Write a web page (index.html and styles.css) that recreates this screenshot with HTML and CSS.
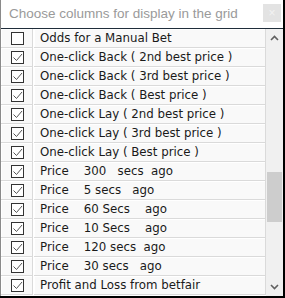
FILE: index.html
```html
<!DOCTYPE html>
<html lang="en">
<head>
    <meta charset="UTF-8">
    <title>Choose columns</title>
    <link rel="stylesheet" href="styles.css">
</head>
<body>
<div class="dialog">
    <div class="titlebar">
        <span class="title">Choose columns for display in the grid</span>
        <span class="close">&times;</span>
    </div>
    <div class="grid">
        <div class="list">
            <div class="row"><div class="check"><span class="box"></span></div><div class="label">Odds for a Manual Bet</div></div>
            <div class="row"><div class="check"><span class="box on"></span></div><div class="label">One-click Back ( 2nd best price )</div></div>
            <div class="row"><div class="check"><span class="box on"></span></div><div class="label">One-click Back ( 3rd best price )</div></div>
            <div class="row"><div class="check"><span class="box on"></span></div><div class="label">One-click Back ( Best price )</div></div>
            <div class="row"><div class="check"><span class="box on"></span></div><div class="label">One-click Lay ( 2nd best price )</div></div>
            <div class="row"><div class="check"><span class="box on"></span></div><div class="label">One-click Lay ( 3rd best price )</div></div>
            <div class="row"><div class="check"><span class="box on"></span></div><div class="label">One-click Lay ( Best price )</div></div>
            <div class="row"><div class="check"><span class="box on"></span></div><div class="label">Price&nbsp;&nbsp;&nbsp;&nbsp;300&nbsp;&nbsp;&nbsp;secs&nbsp;&nbsp;ago</div></div>
            <div class="row"><div class="check"><span class="box on"></span></div><div class="label">Price&nbsp;&nbsp;&nbsp;&nbsp;5 secs&nbsp;&nbsp;&nbsp;ago</div></div>
            <div class="row"><div class="check"><span class="box on"></span></div><div class="label">Price&nbsp;&nbsp;&nbsp;&nbsp;60 Secs&nbsp;&nbsp;&nbsp;&nbsp;ago</div></div>
            <div class="row"><div class="check"><span class="box on"></span></div><div class="label">Price&nbsp;&nbsp;&nbsp;&nbsp;10 Secs&nbsp;&nbsp;&nbsp;&nbsp;ago</div></div>
            <div class="row"><div class="check"><span class="box on"></span></div><div class="label">Price&nbsp;&nbsp;&nbsp;&nbsp;120 secs&nbsp;&nbsp;ago</div></div>
            <div class="row"><div class="check"><span class="box on"></span></div><div class="label">Price&nbsp;&nbsp;&nbsp;&nbsp;30 secs&nbsp;&nbsp;&nbsp;ago</div></div>
            <div class="row"><div class="check"><span class="box on"></span></div><div class="label">Profit and Loss from betfair</div></div>
        </div>
        <div class="scrollbar">
            <svg class="arrow" width="9" height="6" viewBox="0 0 9 6"><path d="M1 5 L4.5 1.5 L8 5" fill="none" stroke="#606060" stroke-width="1.6"/></svg>
            <div class="track"><div class="thumb"></div></div>
            <svg class="arrow" width="9" height="6" viewBox="0 0 9 6"><path d="M1 1 L4.5 4.5 L8 1" fill="none" stroke="#606060" stroke-width="1.6"/></svg>
        </div>
    </div>
</div>
</body>
</html>
```

FILE: styles.css
```css
body {
    margin: 0;
    background: #000;
    font-family: "Liberation Sans", Arial, sans-serif;
}

.dialog {
    width: 282px;
    height: 296px;
    background: #fff;
    border-left: 1px solid #8a8a8a;
    display: flex;
    flex-direction: column;
}

.titlebar {
    height: 28px;
    display: flex;
    align-items: center;
    justify-content: space-between;
    padding: 0 2px 0 8px;
    border-bottom: 1px solid #1f2d3a;
}

.title {
    color: #9a9a9a;
    font-size: 13.5px;
    margin-top: -2px;
}

.close {
    width: 18px;
    height: 18px;
    margin-top: -2px;
    background: #e3e3e3;
    color: #f2f2f2;
    font-size: 12px;
    line-height: 18px;
    text-align: center;
}

.grid {
    flex: 1;
    display: flex;
    overflow: hidden;
}

.list {
    flex: 1;
    display: flex;
    flex-direction: column;
}

.row {
    height: 19px;
    display: flex;
    flex-shrink: 0;
}

.check, .label {
    background: #f9f9f9;
    border-right: 1px solid #dadada;
    border-bottom: 1px solid #dadada;
    box-shadow: inset 1px 1px 0 #fff;
    box-sizing: border-box;
}

.check {
    width: 32px;
    display: flex;
    align-items: center;
    justify-content: center;
    padding-left: 1px;
}

.label {
    flex: 1;
    margin-left: 1px;
    padding-left: 6px;
    font-family: "DejaVu Sans", sans-serif;
    font-size: 11.8px;
    line-height: 18px;
    color: #1a1a1a;
    white-space: nowrap;
    overflow: hidden;
}

.box {
    width: 11px;
    height: 11px;
    border: 1px solid #333;
    background: #fff;
    display: block;
}

.box.on {
    background: #fff url("data:image/svg+xml,%3Csvg xmlns='http://www.w3.org/2000/svg' width='11' height='11'%3E%3Cpath d='M1.5 5.5 L4.5 8.5 L10 2' fill='none' stroke='%23555' stroke-width='1'/%3E%3C/svg%3E") no-repeat center;
}

.scrollbar {
    width: 17px;
    background: #f0f0f0;
    display: flex;
    flex-direction: column;
    align-items: center;
}

.arrow {
    flex-shrink: 0;
    margin: 6px 0;
}

.track {
    flex: 1;
    width: 100%;
    position: relative;
}

.thumb {
    position: absolute;
    left: 1px;
    right: 1px;
    top: 125px;
    height: 50px;
    background: #cdcdcd;
}
```
